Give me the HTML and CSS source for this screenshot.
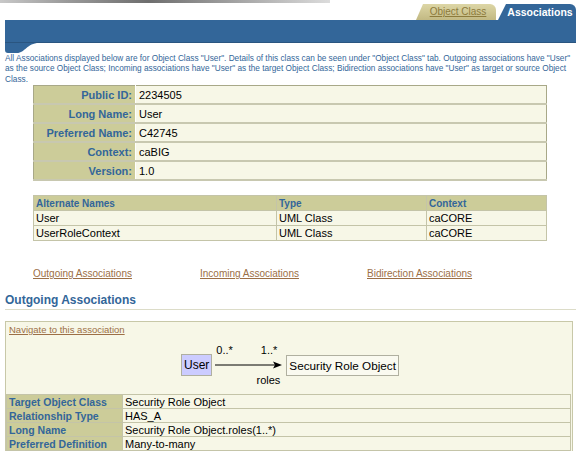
FILE: index.html
```html
<!DOCTYPE html>
<html>
<head>
<meta charset="utf-8">
<link rel="stylesheet" href="styles.css">
</head>
<body>
<div class="header">
  <div class="strip"></div>
  <div class="tabs">
    <a class="tab tab-off" href="#">Object Class</a>
    <span class="tab tab-on">Associations</span>
  </div>
  <div class="bar"></div>
  <svg class="curl" width="34" height="11" viewBox="0 0 34 11"><path d="M0 0 H34 C22 0 20 10 12 10 H3 Q0 10 0 7 Z" fill="#336699"/></svg>
</div>

<p class="intro">All Associations displayed below are for Object Class "User". Details of this class can be seen under "Object Class" tab. Outgoing associations have "User"<br>as the source Object Class; Incoming associations have "User" as the target Object Class; Bidirection associations have "User" as target or source Object<br>Class.</p>

<table class="props">
  <tr><th>Public ID:</th><td>2234505</td></tr>
  <tr><th>Long Name:</th><td>User</td></tr>
  <tr><th>Preferred Name:</th><td>C42745</td></tr>
  <tr><th>Context:</th><td>caBIG</td></tr>
  <tr><th>Version:</th><td>1.0</td></tr>
</table>

<table class="alt">
  <tr><th class="c1">Alternate Names</th><th class="c2">Type</th><th>Context</th></tr>
  <tr><td>User</td><td>UML Class</td><td>caCORE</td></tr>
  <tr><td>UserRoleContext</td><td>UML Class</td><td>caCORE</td></tr>
</table>

<div class="links">
  <a href="#" class="lk">Outgoing Associations</a>
  <a href="#" class="lk">Incoming Associations</a>
  <a href="#" class="lk">Bidirection Associations</a>
</div>

<h2 class="section">Outgoing Associations</h2>

<div class="assoc">
  <a href="#" class="nav">Navigate to this association</a>
  <div class="diagram">
    <span class="node src">User</span>
    <div class="edge">
      <div class="mult"><span>0..*</span><span>1..*</span></div>
      <svg class="arrow" width="68" height="8" viewBox="0 0 68 8"><line x1="0" y1="4" x2="60" y2="4" stroke="#000" stroke-width="1"/><path d="M58 0.5 L67 4 L58 7.5 L60 4 Z" fill="#000"/></svg>
      <div class="role">roles</div>
    </div>
    <span class="node dst">Security Role Object</span>
  </div>
  <table class="detail">
    <tr><th>Target Object Class</th><td>Security Role Object</td></tr>
    <tr><th>Relationship Type</th><td>HAS_A</td></tr>
    <tr><th>Long Name</th><td>Security Role Object.roles(1..*)</td></tr>
    <tr><th>Preferred Definition</th><td>Many-to-many</td></tr>
  </table>
</div>
</body>
</html>
```

FILE: styles.css
```css
html, body {
  margin: 0;
  padding: 0;
  background: #ffffff;
  font-family: "Liberation Sans", Arial, sans-serif;
  overflow: hidden;
}
.header {
  display: flex;
  flex-direction: column;
}
.strip {
  width: 330px;
  height: 3px;
  background: linear-gradient(90deg, #c8c8c8 0%, #9a9a9a 20%, #6e6e6e 45%, #8c8c8c 60%, #b4b4b4 80%, #dcdcdc 100%);
}
.tabs {
  display: flex;
  justify-content: flex-end;
  align-items: flex-end;
  height: 16px;
  margin-top: 1px;
}
.tab {
  height: 16px;
  line-height: 16px;
  text-align: center;
  border-top-left-radius: 4px;
  border-top-right-radius: 6px;
}
.tab-off {
  width: 80px;
  margin-right: 2px;
  font-size: 10px;
  color: #8d7b3c;
  background: linear-gradient(#ddd6a6, #c2b983);
  clip-path: polygon(7px 0, 100% 0, 100% 100%, 0 100%);
  padding-left: 4px;
  box-sizing: border-box;
}
.tab-on {
  width: 78px;
  font-size: 10.5px;
  font-weight: bold;
  color: #ffffff;
  background: #336699;
  clip-path: polygon(8px 0, 100% 0, 100% 100%, 0 100%);
  padding-left: 6px;
  box-sizing: border-box;
}
.bar {
  margin-left: 5px;
  height: 22px;
  background: #336699;
  border-bottom: 1px solid #2a5580;
}
.curl {
  display: block;
  margin-left: 5px;
}
.intro {
  margin: 0 0 0 5px;
  width: 571px;
  font-size: 8.25px;
  line-height: 10.4px;
  color: #336699;
  white-space: nowrap;
}
.props {
  margin: 0 0 0 33px;
  width: 514px;
  border-collapse: collapse;
  border: 1px solid #a8a888;
}
.props th, .props td {
  height: 17px;
  padding: 0 3px;
  border-bottom: 2px solid #c8c8b0;
  font-size: 11px;
}
.props th {
  width: 95px;
  background: #cccc99;
  color: #336699;
  text-align: right;
  font-weight: bold;
  border-right: 1px solid #ffffff;
}
.props td {
  background: #f7f7e7;
  color: #000;
}
.alt {
  margin: 14px 0 0 33px;
  width: 514px;
  border-collapse: collapse;
  border: 1px solid #a8a888;
}
.alt th, .alt td {
  height: 14px;
  padding: 0 2px;
  text-align: left;
  border: 1px solid #c4c4a8;
}
.alt th {
  font-size: 10px;
  background: #cccc99;
  color: #336699;
  font-weight: bold;
}
.alt td {
  font-size: 11px;
  background: #f7f7e7;
  color: #000;
}
.alt .c1 { width: 238px; }
.alt .c2 { width: 145px; }
.links {
  display: flex;
  margin: 27px 0 0 33px;
  font-size: 10px;
}
.lk {
  color: #9c6f46;
  width: 167px;
}
.section {
  margin: 14px 0 0 5px;
  padding-bottom: 2px;
  font-size: 12px;
  font-weight: bold;
  color: #336699;
  border-bottom: 1px solid #dcdcc8;
}
.assoc {
  margin: 11px 3px 0 5px;
  background: #f7f7e7;
  border: 1px solid #c8c8a8;
  padding: 2px 1px 0 0;
}
.nav {
  display: block;
  margin-left: 3px;
  font-size: 9.5px;
  color: #9c6f46;
}
.diagram {
  display: flex;
  align-items: center;
  margin: 4px 0 3px 175px;
  height: 52px;
}
.node {
  font-size: 12px;
  padding: 3px 2px;
  border: 1px solid #b0b0a0;
}
.src {
  background: #ccccff;
}
.dst {
  font-size: 11.7px;
  background: #fafaf0;
}
.edge {
  display: flex;
  flex-direction: column;
  align-items: center;
  width: 74px;
  font-size: 11px;
  line-height: 13px;
  color: #000;
}
.mult {
  align-self: stretch;
  display: flex;
  justify-content: space-between;
  padding: 0 9px 0 4px;
}
.arrow {
  display: block;
  margin: 4px 0 5px 0;
}
.role {
  align-self: flex-end;
  margin-right: 6px;
}
.detail {
  width: 100%;
  border-collapse: collapse;
  border: 1px solid #b0b090;
}
.detail th, .detail td {
  height: 13px;
  padding: 0 2px;
  line-height: 12px;
  text-align: left;
  border: 1px solid #c4c4a8;
}
.detail th {
  width: 111px;
  font-size: 10.5px;
  background: #cccc99;
  color: #336699;
  font-weight: bold;
}
.detail td {
  font-size: 11px;
  background: #f7f7e7;
}
```
